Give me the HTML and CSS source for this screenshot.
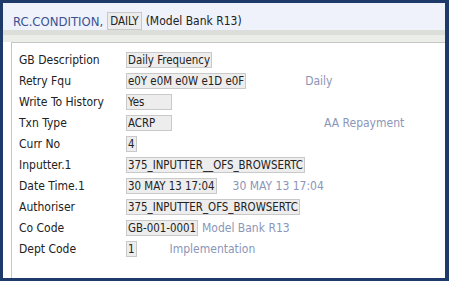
FILE: index.html
```html
<!DOCTYPE html>
<html>
<head>
<meta charset="utf-8">
<link rel="stylesheet" href="styles.css">
</head>
<body>
<div class="frame">
  <div class="titlebar">
    <span class="app">RC.CONDITION,</span>
    <span class="idbox">DAILY</span>
    <span class="bank">(Model Bank R13)</span>
  </div>
  <div class="band"></div>
  <div class="content">
    <div class="panel">
      <div class="row"><span class="label">GB Description</span><span class="val">Daily Frequency</span></div>
      <div class="row"><span class="label">Retry Fqu</span><span class="val">e0Y e0M e0W e1D e0F</span><span class="desc d-daily">Daily</span></div>
      <div class="row"><span class="label">Write To History</span><span class="val w46">Yes</span></div>
      <div class="row"><span class="label">Txn Type</span><span class="val w46">ACRP</span><span class="desc d-aa">AA Repayment</span></div>
      <div class="row"><span class="label">Curr No</span><span class="val">4</span></div>
      <div class="row"><span class="label">Inputter.1</span><span class="val">375_INPUTTER__OFS_BROWSERTC</span></div>
      <div class="row"><span class="label">Date Time.1</span><span class="val">30 MAY 13 17:04</span><span class="desc d-date">30 MAY 13 17:04</span></div>
      <div class="row"><span class="label">Authoriser</span><span class="val">375_INPUTTER_OFS_BROWSERTC</span></div>
      <div class="row"><span class="label">Co Code</span><span class="val">GB-001-0001</span><span class="desc d-co">Model Bank R13</span></div>
      <div class="row"><span class="label">Dept Code</span><span class="val">1</span><span class="desc d-dept">Implementation</span></div>
    </div>
  </div>
</div>
</body>
</html>
```
FILE: styles.css
```css
html, body {
  margin: 0;
  padding: 0;
  width: 449px;
  height: 281px;
  overflow: hidden;
  background: #1d3a6a;
}
.frame {
  box-sizing: border-box;
  width: 449px;
  height: 281px;
  border-style: solid;
  border-color: #1d3a6a;
  border-width: 3px 4px 3px 3px;
  background: #ffffff;
  display: flex;
  flex-direction: column;
  font-family: "DejaVu Sans Condensed", "DejaVu Sans", sans-serif;
  font-size: 12px;
  color: #222;
}
.titlebar {
  box-sizing: border-box;
  height: 27px;
  background: #eff1fb;
  display: flex;
  align-items: center;
  padding: 10px 0 1px 10px;
  gap: 4px;
}
.app {
  color: #3a5190;
  font-size: 13px;
}
.idbox {
  background: #ececec;
  border: 1px solid #c8c8c8;
  padding: 0 2px;
  height: 16px;
  line-height: 16px;
  font-size: 11.5px;
  color: #222;
}
.bank {
  font-size: 12px;
  color: #222;
}
.band {
  height: 12px;
  background: linear-gradient(#dcdfd9 0, #dcdfd9 5px, #ebede8 5px);
}
.content {
  flex: 1;
  padding-left: 8px;
}
.panel {
  height: 100%;
  box-sizing: border-box;
  border-left: 1px solid #c6c6c6;
  border-top: 1px solid #c6c6c6;
  padding: 6px 0 0 7px;
}
.row {
  height: 21px;
  display: flex;
  align-items: center;
}
.label {
  width: 107px;
  flex: none;
}
.val {
  box-sizing: border-box;
  height: 16px;
  line-height: 14px;
  background: #ededed;
  border: 1px solid #c9c9c9;
  padding: 0 1px;
  white-space: nowrap;
  font-size: 11.4px;
}
.w46 { width: 46px; }
.desc {
  color: #8b95b8;
  white-space: nowrap;
}
.d-daily { margin-left: 59px; }
.d-aa { margin-left: 152px; }
.d-date { margin-left: 16px; }
.d-co { margin-left: 4px; }
.d-dept { margin-left: 33px; }
```
